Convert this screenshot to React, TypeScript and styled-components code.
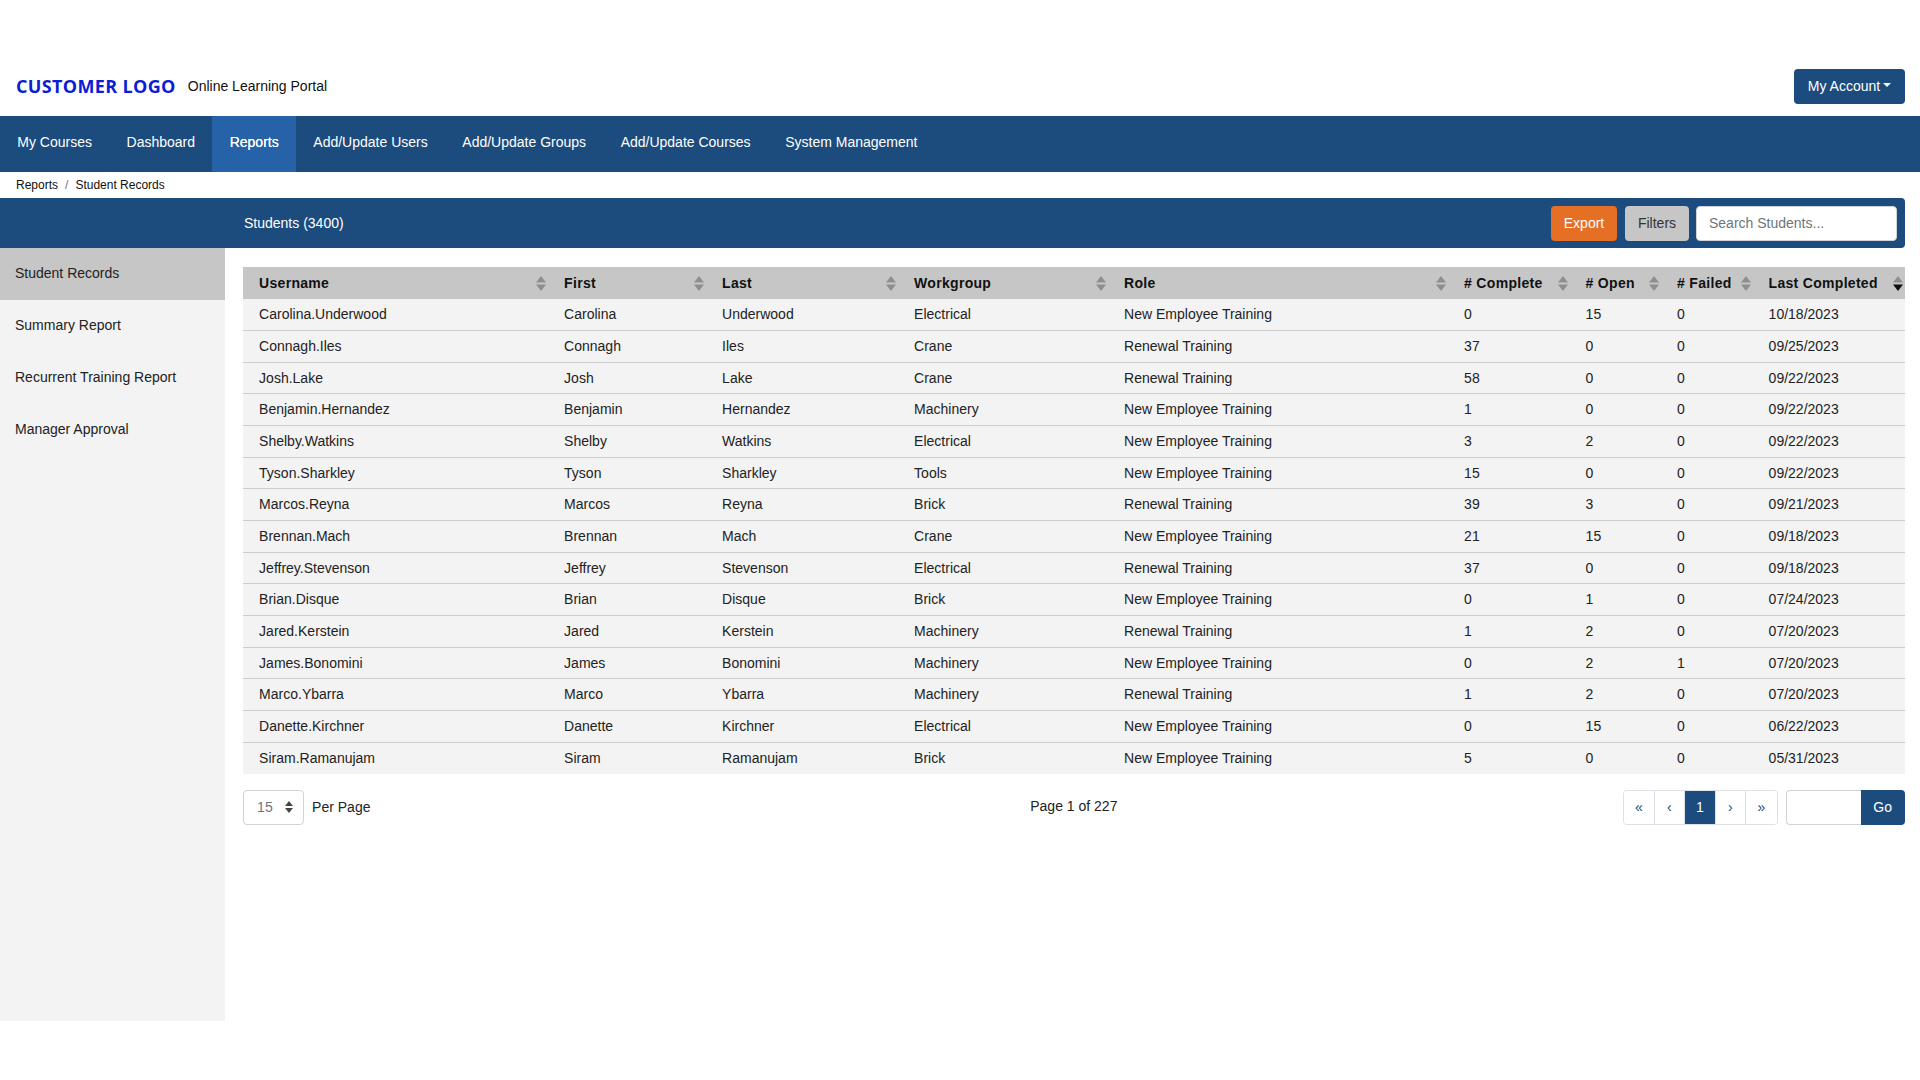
import styled, { createGlobalStyle } from 'styled-components';

const NAVY = '#1c4b7d';
const GREY = '#c6c6c6';
const PALE = '#f3f3f3';

const NAV_ITEMS = [
  'My Courses',
  'Dashboard',
  'Reports',
  'Add/Update Users',
  'Add/Update Groups',
  'Add/Update Courses',
  'System Management',
];

const SIDE_ITEMS = [
  'Student Records',
  'Summary Report',
  'Recurrent Training Report',
  'Manager Approval',
];

const COLUMNS = [
  { label: 'Username', width: 305 },
  { label: 'First', width: 158 },
  { label: 'Last', width: 192 },
  { label: 'Workgroup', width: 210 },
  { label: 'Role', width: 340 },
  { label: '# Complete', width: 121.5 },
  { label: '# Open', width: 91.5 },
  { label: '# Failed', width: 91.5 },
  { label: 'Last Completed', width: 152.5, sorted: true },
];

const NEW = 'New Employee Training';
const RENEW = 'Renewal Training';

const ROWS = [
  ['Carolina', 'Underwood', 'Electrical', NEW, 0, 15, 0, '10/18/2023'],
  ['Connagh', 'Iles', 'Crane', RENEW, 37, 0, 0, '09/25/2023'],
  ['Josh', 'Lake', 'Crane', RENEW, 58, 0, 0, '09/22/2023'],
  ['Benjamin', 'Hernandez', 'Machinery', NEW, 1, 0, 0, '09/22/2023'],
  ['Shelby', 'Watkins', 'Electrical', NEW, 3, 2, 0, '09/22/2023'],
  ['Tyson', 'Sharkley', 'Tools', NEW, 15, 0, 0, '09/22/2023'],
  ['Marcos', 'Reyna', 'Brick', RENEW, 39, 3, 0, '09/21/2023'],
  ['Brennan', 'Mach', 'Crane', NEW, 21, 15, 0, '09/18/2023'],
  ['Jeffrey', 'Stevenson', 'Electrical', RENEW, 37, 0, 0, '09/18/2023'],
  ['Brian', 'Disque', 'Brick', NEW, 0, 1, 0, '07/24/2023'],
  ['Jared', 'Kerstein', 'Machinery', RENEW, 1, 2, 0, '07/20/2023'],
  ['James', 'Bonomini', 'Machinery', NEW, 0, 2, 1, '07/20/2023'],
  ['Marco', 'Ybarra', 'Machinery', RENEW, 1, 2, 0, '07/20/2023'],
  ['Danette', 'Kirchner', 'Electrical', NEW, 0, 15, 0, '06/22/2023'],
  ['Siram', 'Ramanujam', 'Brick', NEW, 5, 0, 0, '05/31/2023'],
];

const PAGES = [
  { label: '«' },
  { label: '‹' },
  { label: '1', active: true },
  { label: '›' },
  { label: '»' },
];

const GlobalStyle = createGlobalStyle`
  html, body {
    margin: 0;
    background: #fff;
  }
  body {
    font-family: 'Liberation Sans', Arial, sans-serif;
    font-size: 14px;
    line-height: 21px;
    color: #212529;
  }
  * {
    box-sizing: border-box;
  }
`;

const Page = styled.div`
  width: 1920px;
  height: 1080px;
  overflow: hidden;
`;

const Header = styled.header`
  height: 116px;
  padding: 69px 15px 0 16px;
  display: flex;
  align-items: flex-start;
`;

const Logo = styled.div`
  font-family: 'Open Sans', sans-serif;
  font-size: 18px;
  font-weight: 700;
  line-height: 35px;
  letter-spacing: 0.35px;
  color: #0a1ed6;
`;

const Tagline = styled.div`
  margin-left: 12px;
  line-height: 35px;
  color: #111;
`;

const AccountButton = styled.button`
  margin-left: auto;
  width: 111px;
  height: 35px;
  border: 0;
  border-radius: 4px;
  background: ${NAVY};
  color: #fff;
  font: inherit;
  display: flex;
  align-items: center;
  justify-content: center;
  gap: 3px;

  &::after {
    content: '';
    border-top: 4px solid #fff;
    border-left: 4px solid transparent;
    border-right: 4px solid transparent;
    margin-bottom: 3px;
  }
`;

const Nav = styled.nav`
  height: 56px;
  background: ${NAVY};
  display: flex;
`;

const NavItem = styled.a<{ $active?: boolean }>`
  padding: 0 17.3px;
  line-height: 53px;
  color: #fff;
  background: ${(props) => (props.$active ? '#2562a8' : 'transparent')};
  text-shadow: ${(props) => (props.$active ? '0 0 0.6px #fff' : 'none')};
`;

const Breadcrumb = styled.div`
  height: 26px;
  padding-left: 16px;
  font-size: 12px;
  line-height: 26px;
  color: #111;
  display: flex;
  gap: 7px;
`;

const Separator = styled.span`
  color: #6c757d;
`;

const PanelBar = styled.div`
  height: 50px;
  margin-right: 15px;
  padding: 0 8px 0 244px;
  background: ${NAVY};
  border-radius: 0 4px 4px 0;
  display: flex;
  align-items: center;
  color: #fff;
`;

const PanelTitle = styled.div`
  margin-right: auto;
`;

const BarButton = styled.button<{ $orange?: boolean }>`
  height: 35px;
  width: ${(props) => (props.$orange ? 66 : 64)}px;
  margin-right: ${(props) => (props.$orange ? 8 : 7)}px;
  padding: 0;
  border: 0;
  border-radius: 4px;
  background: ${(props) => (props.$orange ? '#e56f25' : GREY)};
  color: ${(props) => (props.$orange ? '#fff' : '#333')};
  font: inherit;
`;

const SearchBox = styled.input`
  width: 201px;
  height: 35px;
  padding: 0 12px;
  border: 1px solid #ced4da;
  border-radius: 4px;
  background: #fff;
  font: inherit;

  &::placeholder {
    color: #6c757d;
    opacity: 1;
  }
`;

const Body = styled.div`
  display: flex;
  align-items: flex-start;
`;

const Sidebar = styled.aside`
  width: 225px;
  height: 773px;
  background: ${PALE};
`;

const SideItem = styled.div<{ $active?: boolean }>`
  height: 52px;
  padding-left: 15px;
  line-height: 51px;
  color: #222;
  background: ${(props) => (props.$active ? GREY : 'transparent')};
`;

const Content = styled.main`
  width: 1680px;
  margin-left: 18.5px;
  padding-top: 19px;
`;

const Table = styled.table`
  width: 1661.5px;
  table-layout: fixed;
  border-collapse: collapse;
`;

const Col = styled.col<{ $width: number }>`
  width: ${(props) => props.$width}px;
`;

const HeadCell = styled.th`
  position: relative;
  height: 32px;
  padding: 0 16px;
  background: ${GREY};
  text-align: left;
  font-weight: 700;
  letter-spacing: 0.3px;
  color: #111;
`;

const SortMark = styled.svg`
  position: absolute;
  right: 2px;
  top: 9px;
  width: 10px;
  height: 15px;
`;

const Row = styled.tr`
  height: 31.67px;
  background: ${PALE};
  border-bottom: 1px solid #cdcdcd;

  &:last-child {
    border-bottom: 0;
  }
`;

const Cell = styled.td`
  padding: 0 16px;
  color: #222;
`;

const Footer = styled.div`
  width: 1661.5px;
  margin-top: 16px;
  display: grid;
  grid-template-columns: 1fr auto 1fr;
  align-items: center;
`;

const PerPage = styled.div`
  display: flex;
  align-items: center;
  gap: 8px;
`;

const PerPageSelect = styled.div`
  width: 61px;
  height: 35px;
  padding-left: 13px;
  border: 1px solid #ced4da;
  border-radius: 4px;
  color: #6c757d;
  line-height: 31px;
  display: flex;
  align-items: center;
  gap: 12px;
`;

const SelectCaret = styled.svg`
  width: 8px;
  height: 12px;
`;

const PageInfo = styled.div`
  margin-bottom: 1px;
  color: #222;
`;

const Pager = styled.div`
  justify-self: end;
  display: flex;
  align-items: center;
`;

const PageLinks = styled.div`
  display: flex;
  height: 35px;
  margin-right: 8px;
  border: 1px solid #dee2e6;
  border-radius: 4px;
  overflow: hidden;
`;

const PageLink = styled.div<{ $active?: boolean }>`
  width: 30.5px;
  line-height: 33px;
  text-align: center;
  font-weight: ${(props) => (props.$active ? 400 : 400)};
  color: ${(props) => (props.$active ? '#fff' : NAVY)};
  background: ${(props) => (props.$active ? NAVY : '#fff')};
  border-right: 1px solid #dee2e6;

  &:last-child {
    border-right: 0;
  }
`;

const GoInput = styled.input`
  width: 75px;
  height: 35px;
  border: 1px solid #ced4da;
  border-right: 0;
  border-radius: 4px 0 0 4px;
`;

const GoButton = styled.button`
  width: 44px;
  height: 35px;
  border: 0;
  border-radius: 0 4px 4px 0;
  background: ${NAVY};
  color: #fff;
  font: inherit;
`;

const App = () => {
  return (
    <Page>
      <GlobalStyle />
      <Header>
        <Logo>CUSTOMER LOGO</Logo>
        <Tagline>Online Learning Portal</Tagline>
        <AccountButton>My Account</AccountButton>
      </Header>
      <Nav>
        {NAV_ITEMS.map((item) => (
          <NavItem key={item} $active={item === 'Reports'}>
            {item}
          </NavItem>
        ))}
      </Nav>
      <Breadcrumb>
        <span>Reports</span>
        <Separator>/</Separator>
        <span>Student Records</span>
      </Breadcrumb>
      <PanelBar>
        <PanelTitle>Students (3400)</PanelTitle>
        <BarButton $orange>Export</BarButton>
        <BarButton>Filters</BarButton>
        <SearchBox placeholder="Search Students..." />
      </PanelBar>
      <Body>
        <Sidebar>
          {SIDE_ITEMS.map((item) => (
            <SideItem key={item} $active={item === 'Student Records'}>
              {item}
            </SideItem>
          ))}
        </Sidebar>
        <Content>
          <Table>
            <colgroup>
              {COLUMNS.map((col) => (
                <Col key={col.label} $width={col.width} />
              ))}
            </colgroup>
            <thead>
              <tr>
                {COLUMNS.map((col) => (
                  <HeadCell key={col.label}>
                    {col.label}
                    <SortMark viewBox="0 0 10 15">
                      <path d="M5 0 10 6.5H0z" fill="#8f8f8f" />
                      <path
                        d="M0 8.5H10L5 15z"
                        fill={col.sorted ? '#111' : '#8f8f8f'}
                      />
                    </SortMark>
                  </HeadCell>
                ))}
              </tr>
            </thead>
            <tbody>
              {ROWS.map((row) => (
                <Row key={`${row[0]}.${row[1]}`}>
                  <Cell>{`${row[0]}.${row[1]}`}</Cell>
                  {row.map((value, i) => (
                    <Cell key={i}>{value}</Cell>
                  ))}
                </Row>
              ))}
            </tbody>
          </Table>
          <Footer>
            <PerPage>
              <PerPageSelect>
                15
                <SelectCaret viewBox="0 0 8 12">
                  <path d="M4 0 8 5H0zM0 7H8L4 12z" fill="#444" />
                </SelectCaret>
              </PerPageSelect>
              Per Page
            </PerPage>
            <PageInfo>Page 1 of 227</PageInfo>
            <Pager>
              <PageLinks>
                {PAGES.map((page) => (
                  <PageLink key={page.label} $active={page.active}>
                    {page.label}
                  </PageLink>
                ))}
              </PageLinks>
              <GoInput />
              <GoButton>Go</GoButton>
            </Pager>
          </Footer>
        </Content>
      </Body>
    </Page>
  );
};

export default App;
